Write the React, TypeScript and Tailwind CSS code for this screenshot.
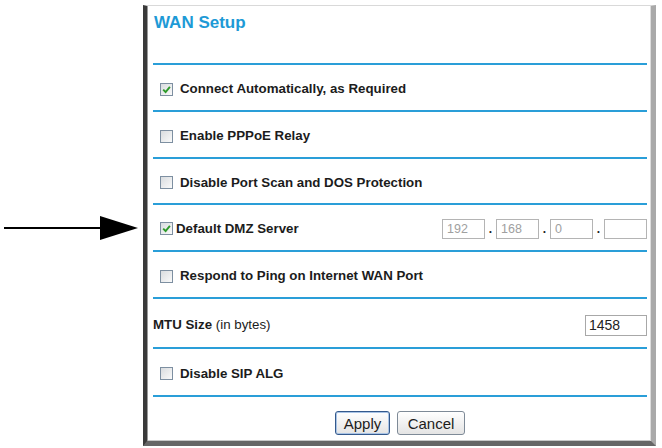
import React from "react";

function Checkbox({ checked }: { checked?: boolean }) {
  return (
    <span className="w-[13px] h-[13px] shrink-0 border border-[#7d8fa1] bg-linear-to-br from-[#d9dcdf] to-[#fafafa] flex items-center justify-center">
      {checked && (
        <svg width="9" height="9" viewBox="0 0 9 9">
          <path d="M1.2 4.6 L3.6 7 L7.9 1.8" stroke="#2e9a2a" strokeWidth="1.9" fill="none" />
        </svg>
      )}
    </span>
  );
}

function Line() {
  return <div className="h-[2px] bg-[#2a9ed8]" />;
}

function CheckRow({ label, checked, h }: { label: string; checked?: boolean; h: string }) {
  return (
    <div className={`${h} flex items-center pl-[7px] pt-[3px]`}>
      <Checkbox checked={checked} />
      <span className="ml-[7px] text-[13.3px] font-bold text-[#1c1c1c]">{label}</span>
    </div>
  );
}

function IpBox({ v }: { v: string }) {
  return (
    <div className="w-[43px] h-[20px] border border-[#b4b4b4] bg-white text-[12.5px] text-[#a0a0a0] pl-[4px] leading-[18px]">
      {v}
    </div>
  );
}

function Dot() {
  return <div className="w-[11px] text-[12px] text-[#222] text-center leading-[26px] font-bold">.</div>;
}

export default function App() {
  return (
    <div
      className="w-[662px] h-[448px] bg-white flex pt-[5px]"
      style={{ fontFamily: '"Liberation Sans", Arial, sans-serif' }}
    >
      <div className="w-[143px] shrink-0">
        <svg width="143" height="26" viewBox="0 0 143 26" className="mt-[210px] block">
          <line x1="4" y1="13" x2="102" y2="13" stroke="#000" strokeWidth="2" />
          <polygon points="100,1 138,13 100,25" fill="#000" />
        </svg>
      </div>
      <div className="w-[513px] h-[441px] shrink-0 border-l-[4px] border-l-[#3a3a3a] border-t border-t-[#d9d9d9] border-r-[5px] border-r-[#a9a9a9] border-b-[5px] border-b-[#666] shadow-[inset_1px_0_0_#9a9a9a,inset_-1px_0_0_#dcdcdc,inset_0_-1px_0_#c8c8c8] flex flex-col pl-[6px] pr-[4px]">
        <div className="h-[57px] pt-[4px] pl-[1px]">
          <span className="text-[17px] font-bold text-[#1e9ad6]">WAN Setup</span>
        </div>
        <Line />
        <CheckRow label="Connect Automatically, as Required" checked h="h-[45px]" />
        <Line />
        <CheckRow label="Enable PPPoE Relay" h="h-[45px]" />
        <Line />
        <CheckRow label="Disable Port Scan and DOS Protection" h="h-[44px]" />
        <Line />
        <div className="h-[45px] flex items-center pl-[7px] pt-[2px]">
          <Checkbox checked />
          <span className="ml-[3px] text-[13.3px] font-bold text-[#1c1c1c]">Default DMZ Server</span>
          <div className="ml-auto flex items-center">
            <IpBox v="192" />
            <Dot />
            <IpBox v="168" />
            <Dot />
            <IpBox v="0" />
            <Dot />
            <IpBox v="" />
          </div>
        </div>
        <Line />
        <CheckRow label="Respond to Ping on Internet WAN Port" h="h-[45px]" />
        <Line />
        <div className="h-[48px] flex items-center pt-[4px]">
          <span className="text-[13.3px] text-[#1c1c1c]">
            <span className="font-bold">MTU Size</span> (in bytes)
          </span>
          <div className="ml-auto w-[62px] h-[21px] border border-[#a8a8a8] bg-white text-[14px] text-[#222] pl-[3px] leading-[19px]">
            1458
          </div>
        </div>
        <Line />
        <CheckRow label="Disable SIP ALG" h="h-[46px]" />
        <Line />
        <div className="flex-1 flex justify-center gap-[7px] pt-[14px]">
          <button className="w-[55px] h-[24px] rounded-[3px] border border-[#34598c] bg-linear-to-b from-white to-[#e4e4e4] text-[15px] leading-none text-[#1c1c1c] shadow-[inset_0_0_0_1px_#a9c4e6]">
            Apply
          </button>
          <button className="w-[68px] h-[24px] rounded-[3px] border border-[#7e8a97] bg-linear-to-b from-white to-[#e4e4e4] text-[15px] leading-none text-[#1c1c1c]">
            Cancel
          </button>
        </div>
      </div>
    </div>
  );
}
